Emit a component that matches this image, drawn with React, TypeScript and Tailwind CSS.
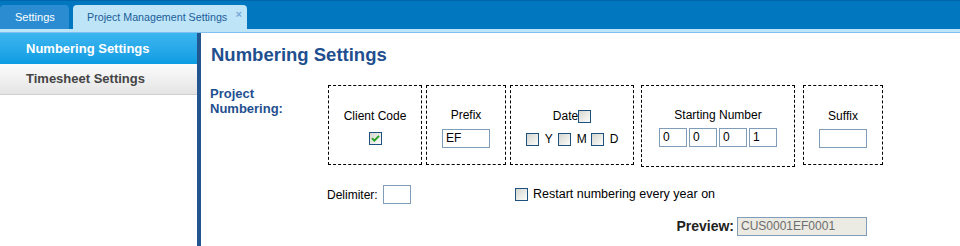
import React from "react";

function Check({ checked = false }: { checked?: boolean }) {
  return (
    <span className="inline-flex w-[13px] h-[13px] shrink-0 border border-[#1c5180] bg-gradient-to-br from-[#d6d6d0] to-[#fcfcfa] items-center justify-center">
      {checked && (
        <svg width="9" height="9" viewBox="0 0 9 9">
          <path d="M1 4.2 L3.3 6.6 L8 1.8" stroke="#22a022" strokeWidth="1.9" fill="none" />
        </svg>
      )}
    </span>
  );
}

function Input({ w, value = "", className = "" }: { w: string; value?: string; className?: string }) {
  return (
    <div className={`${w} h-[19px] border border-[#7f9db9] bg-white text-[12px] leading-[17px] pl-[3px] text-black ${className}`}>
      {value}
    </div>
  );
}

export default function App() {
  return (
    <div className="w-[960px] h-[246px] overflow-hidden bg-white font-['Liberation_Sans',Arial,sans-serif]">
      {/* header */}
      <div className="h-[29px] bg-[#0077bf] border-t border-[#0066ab] flex items-end">
        <div className="w-[69px] h-[24px] rounded-t-[4px] bg-[#2b8cd2] text-white text-[11px] flex items-center pl-[15px]">
          Settings
        </div>
        <div className="relative ml-[4px] w-[174px] h-[24px] rounded-t-[4px] bg-[#bee4f8] text-[#1b5d98] text-[10.7px] flex items-center pl-[14px]">
          Project Management Settings
          <span className="absolute right-[5px] top-[1px] text-[11px] font-bold text-[#79a9da]">×</span>
        </div>
      </div>
      <div className="h-[3px] bg-[#bee4f8]" />
      <div className="h-[1px] bg-[#80bff0]" />

      {/* body */}
      <div className="flex h-[213px]">
        <div className="w-[197px] flex flex-col">
          <div className="h-[31px] bg-gradient-to-b from-[#3bb6f0] to-[#0b9ce2] text-white font-bold text-[13px] flex items-center pl-[26px]">
            Numbering Settings
          </div>
          <div className="h-[31px] bg-gradient-to-b from-[#fcfcfc] to-[#e4e4e4] border-b border-[#cfcfcf] text-[#444] font-bold text-[13px] flex items-center pl-[26px]">
            Timesheet Settings
          </div>
        </div>
        <div className="w-[4px] bg-[#23568f]" />
        <div className="flex-1 pl-[9px] pt-[11px]">
          <div className="text-[18.5px] leading-[22px] font-bold text-[#1f4f8f] pl-[1px]">Numbering Settings</div>

          <div className="flex mt-[19px]">
            <div className="w-[118px] text-[13px] leading-[15px] font-bold text-[#1f4f8f] pt-[1px]">
              Project
              <br />
              Numbering:
            </div>
            <div className="flex items-start text-[12px] leading-[16px] text-black">
              <div className="w-[94px] h-[80px] border border-dashed border-black flex flex-col items-center pt-[22px]">
                <div>Client Code</div>
                <div className="mt-[8px] flex">
                  <Check checked />
                </div>
              </div>
              <div className="ml-[4px] w-[80px] h-[80px] border border-dashed border-black flex flex-col items-center pt-[21px]">
                <div>Prefix</div>
                <Input w="w-[48px]" value="EF" className="mt-[6px]" />
              </div>
              <div className="ml-[4px] w-[124px] h-[80px] border border-dashed border-black flex flex-col items-center pt-[22px]">
                <div className="flex items-center">
                  <span>Date</span>
                  <Check />
                </div>
                <div className="mt-[7px] flex items-center">
                  <Check />
                  <span className="pl-[6px] pr-[5px]">Y</span>
                  <Check />
                  <span className="pl-[6px] pr-[4px]">M</span>
                  <Check />
                  <span className="pl-[6px]">D</span>
                </div>
              </div>
              <div className="ml-[7px] w-[154px] h-[82px] border border-dashed border-black flex flex-col items-center pt-[21px]">
                <div>Starting Number</div>
                <div className="mt-[5px] flex gap-[2px]">
                  <Input w="w-[28px]" value="0" />
                  <Input w="w-[28px]" value="0" />
                  <Input w="w-[28px]" value="0" />
                  <Input w="w-[28px]" value="1" />
                </div>
              </div>
              <div className="ml-[8px] w-[80px] h-[80px] border border-dashed border-black flex flex-col items-center pt-[22px]">
                <div>Suffix</div>
                <Input w="w-[48px]" className="mt-[5px]" />
              </div>
            </div>
          </div>

          <div className="ml-[117px] mt-[18px] flex items-center text-[12px] text-black">
            <span className="w-[54px]">Delimiter:</span>
            <Input w="w-[28px]" className="ml-[2px]" />
            <span className="ml-[104px] flex items-center">
              <Check />
              <span className="ml-[5px] text-[12.5px]">Restart numbering every year on</span>
            </span>
          </div>

          <div className="ml-[118px] w-[539px] mt-[12px] flex items-center justify-end">
            <span className="text-[14px] font-bold text-[#222]">Preview:</span>
            <div className="ml-[3px] w-[130px] h-[19px] border border-[#7f9db9] bg-[#ebeae3] text-[12px] leading-[17px] pl-[3px] text-[#6d6d6d]">
              CUS0001EF0001
            </div>
          </div>
        </div>
      </div>
    </div>
  );
}
